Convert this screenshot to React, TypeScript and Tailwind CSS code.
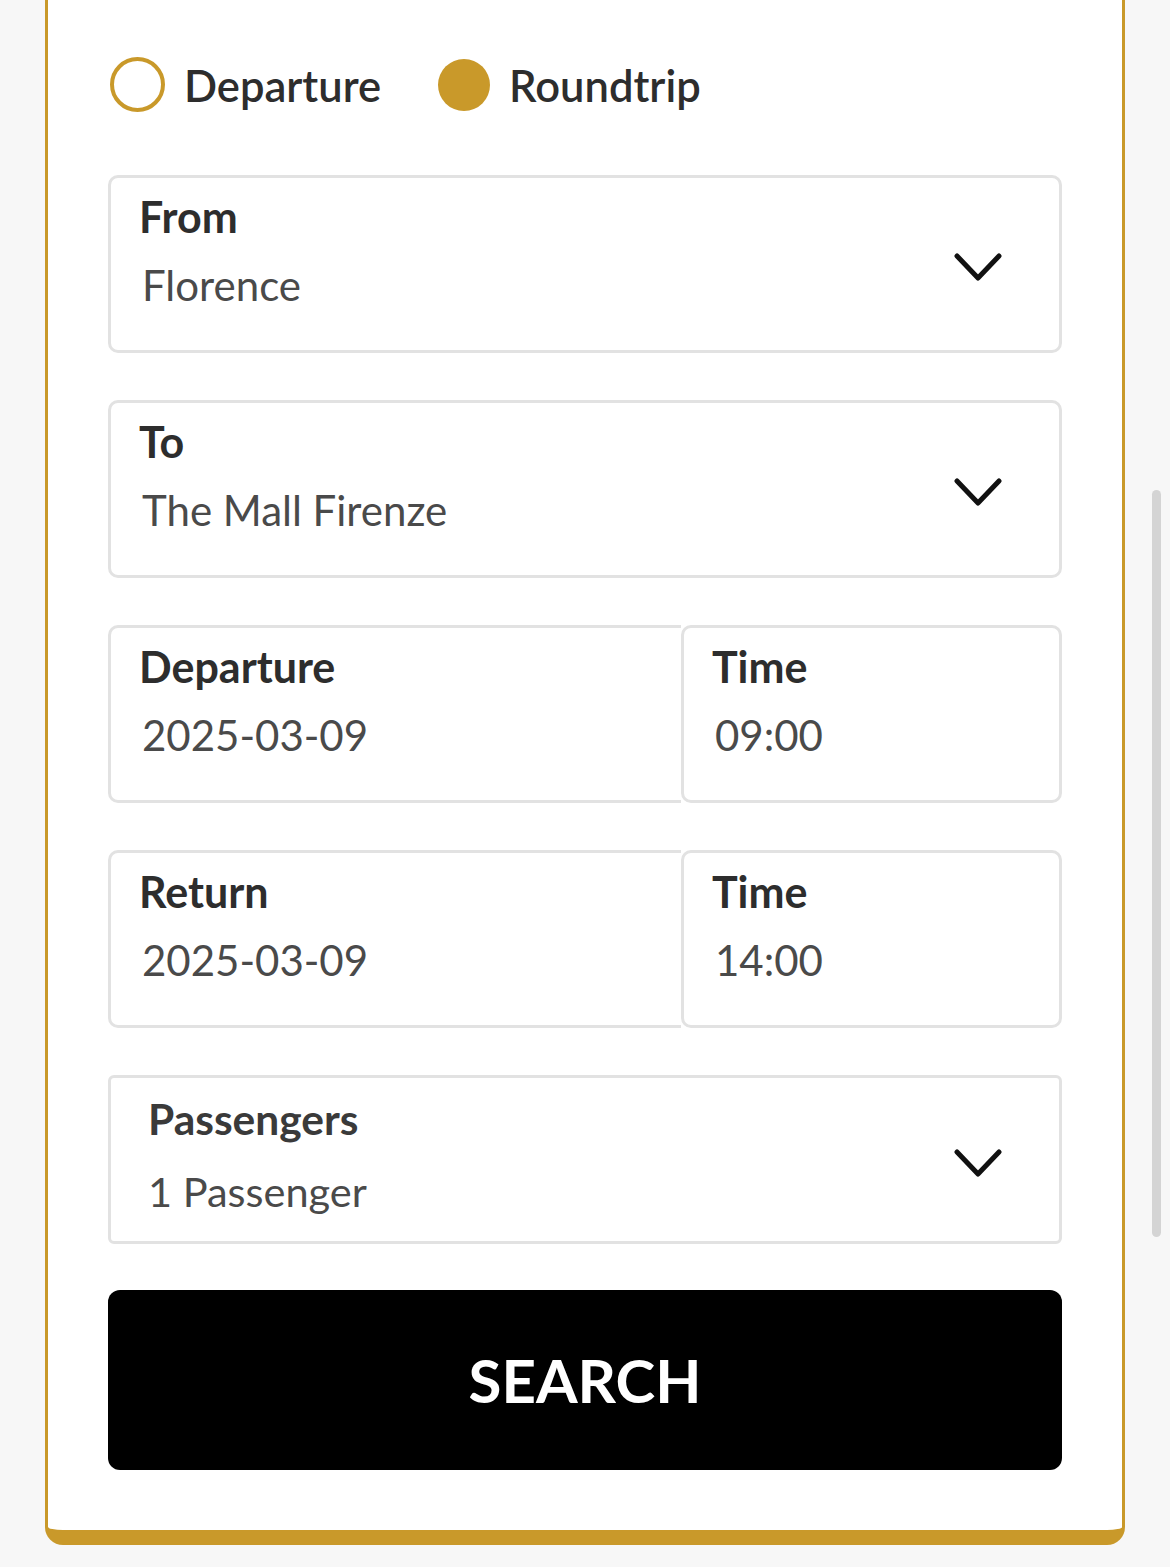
import React from "react";

const GOLD = "#c9992a";

function Chevron() {
  return (
    <svg width="48" height="32" viewBox="0 0 48 32" fill="none" className="mt-[8px] shrink-0">
      <polyline
        points="3,4 24,26 45,4"
        stroke="#111"
        strokeWidth="5"
        strokeLinecap="round"
        strokeLinejoin="round"
      />
    </svg>
  );
}

function Field({
  label,
  value,
  chevron,
  className = "",
}: {
  label: string;
  value: string;
  chevron?: boolean;
  className?: string;
}) {
  return (
    <div
      className={
        "flex h-[178px] items-center border-[3px] border-[#e2e2e2] bg-white pl-[28px] pr-[57px] " +
        className
      }
    >
      <div className="flex flex-1 flex-col self-start pt-[14px]">
        <span className="text-[43px] font-bold leading-[50px] text-[#2d2d2d]">{label}</span>
        <span className="mt-[18px] pl-[3px] text-[42px] leading-[50px] text-[#4a4a4a]">{value}</span>
      </div>
      {chevron && <Chevron />}
    </div>
  );
}

function Radio({ label, checked }: { label: string; checked?: boolean }) {
  return (
    <label className="flex items-center gap-[19px]">
      {checked ? (
        <span className="block h-[52px] w-[52px] rounded-full bg-[#c9992a]" />
      ) : (
        <span className="block h-[55px] w-[55px] rounded-full border-[4px] border-[#c9992a]" />
      )}
      <span className="text-[43.5px] font-semibold leading-[50px] text-[#2d2d2d]">{label}</span>
    </label>
  );
}

export default function App() {
  return (
    <div
      className="relative min-h-screen bg-[#f7f7f7]"
      style={{ fontFamily: "Lato, 'Noto Sans', 'Liberation Sans', sans-serif" }}
    >
      <div
        className="ml-[45px] w-[1080px] rounded-b-[18px] border-x-[3px] border-b-[15px] bg-white px-[60px] pb-[60px] pt-[57px]"
        style={{ borderColor: GOLD }}
      >
        <div className="flex items-center pl-[2px]">
          <Radio label="Departure" />
          <div className="w-[57px]" />
          <Radio label="Roundtrip" checked />
        </div>

        <div className="mt-[63px] flex flex-col gap-[47px]">
          <Field label="From" value="Florence" chevron className="rounded-[10px]" />
          <Field label="To" value="The Mall Firenze" chevron className="rounded-[10px]" />

          <div className="flex">
            <Field label="Departure" value="2025-03-09" className="w-[573px] rounded-l-[10px] border-r-0" />
            <Field label="Time" value="09:00" className="flex-1 rounded-[10px]" />
          </div>

          <div className="flex">
            <Field label="Return" value="2025-03-09" className="w-[573px] rounded-l-[10px] border-r-0" />
            <Field label="Time" value="14:00" className="flex-1 rounded-[10px]" />
          </div>

          <div className="flex h-[169px] items-center rounded-[6px] border-[3px] border-[#e2e2e2] pl-[37px] pr-[57px]">
            <div className="flex flex-1 flex-col self-start pt-[16px]">
              <span className="text-[42.5px] font-bold leading-[50px] text-[#3a3a3a]">Passengers</span>
              <span className="mt-[22px] text-[41.5px] leading-[50px] text-[#4a4a4a]">1 Passenger</span>
            </div>
            <Chevron />
          </div>
        </div>

        <button className="mt-[46px] flex h-[180px] w-full items-center justify-center rounded-[12px] bg-black text-[60px] font-bold text-white">
          SEARCH
        </button>
      </div>

      <div className="absolute left-[1152px] top-[490px] h-[747px] w-[9px] rounded-full bg-[#d4d4d4]" />
    </div>
  );
}
